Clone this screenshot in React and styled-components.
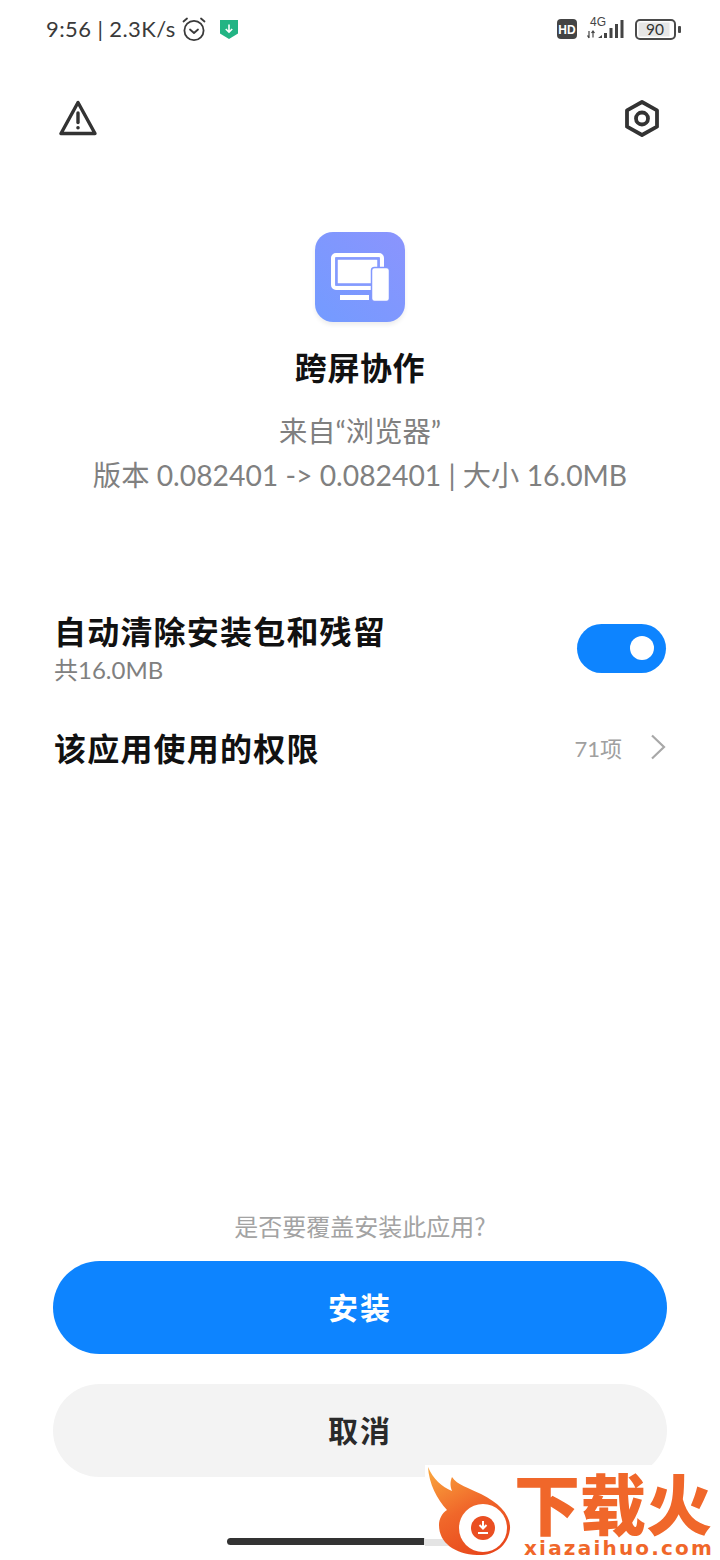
import styled, { createGlobalStyle } from 'styled-components';

const GlobalStyle = createGlobalStyle`
  html, body { margin: 0; padding: 0; background: #fff; }
  body { font-family: 'Noto Sans CJK SC', 'Noto Sans', sans-serif; }
`;

const Page = styled.div`
  position: relative;
  width: 720px;
  height: 1560px;
  overflow: hidden;
  background: #fff;
  display: flex;
  flex-direction: column;
`;

const StatusBar = styled.div`
  height: 30px;
  margin-top: 14px;
  padding: 0 38px 0 46px;
  display: flex;
  align-items: center;
  justify-content: space-between;
  color: #3a3a3a;
`;

const StatusGroup = styled.div`
  display: flex;
  align-items: center;
  gap: ${p => p.$gap || 0}px;
`;

const StatusText = styled.span`
  font-family: 'Lato', 'Open Sans', sans-serif;
  font-size: 22px;
  letter-spacing: 0.4px;
  line-height: 30px;
  margin-right: 5px;
`;

const TopBar = styled.div`
  margin-top: 52px;
  padding: 0 61px 0 59px;
  display: flex;
  justify-content: space-between;
  align-items: center;
  height: 44px;
`;

const Hero = styled.div`
  margin-top: 92px;
  display: flex;
  flex-direction: column;
  align-items: center;
`;

const AppIcon = styled.div`
  width: 90px;
  height: 90px;
  border-radius: 18px;
  background: linear-gradient(45deg, #739bff, #8b94fd);
  box-shadow: 0 3px 4px rgba(0, 0, 0, 0.07);
  display: flex;
`;

const AppName = styled.div`
  margin-top: 22px;
  font-size: 32px;
  line-height: 44px;
  font-weight: 700;
  color: #111;
  letter-spacing: 0.6px;
`;

const Meta = styled.div`
  margin-top: 21px;
  font-size: 28.3px;
  line-height: 44px;
  color: #808080;
  text-align: center;
  font-family: 'Lato', 'Noto Sans CJK SC', sans-serif;
`;

const Rows = styled.div`
  margin-top: 106px;
  padding: 0 54px;
  display: flex;
  flex-direction: column;
`;

const Row = styled.div`
  display: flex;
  align-items: center;
  justify-content: space-between;
  height: ${p => p.$h}px;
`;

const RowTitle = styled.div`
  font-size: 32px;
  line-height: 44px;
  font-weight: 700;
  color: #111;
  letter-spacing: 1.2px;
`;

const RowSub = styled.div`
  font-size: 24px;
  line-height: 36px;
  color: #808080;
  font-family: 'Lato', 'Noto Sans CJK SC', sans-serif;
`;

const Toggle = styled.div`
  width: 89px;
  height: 49px;
  border-radius: 25px;
  background: #0d84ff;
  display: flex;
  align-items: center;
  justify-content: flex-end;
  padding-right: 12px;
  box-sizing: border-box;
`;

const Knob = styled.div`
  width: 24px;
  height: 24px;
  border-radius: 50%;
  background: #fff;
`;

const Trailing = styled.div`
  display: flex;
  align-items: center;
  gap: 28px;
  font-size: 22px;
  color: #a0a0a0;
  font-family: 'Lato', 'Noto Sans CJK SC', sans-serif;
`;

const Footer = styled.div`
  margin-top: auto;
  padding: 0 53px;
  display: flex;
  flex-direction: column;
  align-items: center;
`;

const Question = styled.div`
  font-size: 24px;
  line-height: 32px;
  color: #a3a3a3;
  margin-bottom: 19px;
`;

const ActionButton = styled.div`
  width: 100%;
  height: 93px;
  padding-bottom: 4px;
  box-sizing: border-box;
  border-radius: 47px;
  margin-bottom: ${p => p.$gap}px;
  background: ${p => (p.$primary ? '#0d84ff' : '#f3f3f3')};
  color: ${p => (p.$primary ? '#fff' : '#2a2a2a')};
  font-size: 30px;
  font-weight: 700;
  letter-spacing: 2px;
  display: flex;
  align-items: center;
  justify-content: center;
`;

const HomeBar = styled.div`
  width: 273px;
  height: 7px;
  border-radius: 4px;
  margin: 0 0 15px 227px;
  background: linear-gradient(90deg, #333 0, #333 197px, #e2e2e2 197px);
`;

const Watermark = styled.div`
  position: absolute;
  left: 425px;
  top: 1465px;
  width: 295px;
  height: 95px;
  background: #fff;
  display: flex;
`;

const BrandText = styled.div`
  flex-shrink: 0;
  margin-left: -1px;
  display: flex;
  flex-direction: column;
  align-items: center;
  color: #f0672a;
  white-space: nowrap;
`;

const BrandName = styled.div`
  font-size: 66px;
  line-height: 66px;
  font-weight: 900;
  margin-top: 3px;
`;

const BrandUrl = styled.div`
  font-family: 'DejaVu Sans', sans-serif;
  font-weight: 700;
  font-size: 20px;
  line-height: 22px;
  letter-spacing: 2.2px;
  margin-top: 3px;
  margin-left: 12px;
`;

const Alarm = () => (
  <svg width="26" height="26" viewBox="0 0 26 26" fill="none" stroke="#3a3a3a" strokeWidth="1.8" strokeLinecap="round" strokeLinejoin="round">
    <circle cx="13" cy="14.5" r="9.6" />
    <path d="M9 13.5l4 3.5 4-3.5M2.5 5.5L6 2.5M23.5 5.5L20 2.5" />
  </svg>
);

const Shield = () => (
  <svg width="18" height="19" viewBox="0 0 18 19" style={{ marginLeft: 13 }}>
    <path d="M0 0h18v13.5L9 19 0 13.5z" fill="#22b484" />
    <path d="M9 4.5v7.5M5.8 9l3.2 3.2L12.2 9" fill="none" stroke="#fff" strokeWidth="1.6" />
  </svg>
);

const HdBadge = () => (
  <svg width="20" height="20" viewBox="0 0 20 20">
    <rect width="20" height="20" rx="4" fill="#444" />
    <text x="10" y="14.5" textAnchor="middle" fontSize="12" fontWeight="700" fontFamily="Liberation Sans" fill="#fff">HD</text>
  </svg>
);

const Signal = () => (
  <svg width="40" height="30" viewBox="0 0 40 30">
    <text x="4" y="12" fontSize="12" fontFamily="Liberation Sans" fill="#444">4G</text>
    <path d="M3 17v7M1.5 21.5l1.5 2.5M7 17v6.5M5.5 19l1.5-2 1.5 2" stroke="#444" strokeWidth="1.2" fill="none" />
    <path d="M12 24l4-3v3zM18 19h3v5h-3zM23.5 14h3v10h-3zM29 10h3v14h-3zM34.5 6h3v18h-3z" fill="#444" />
  </svg>
);

const Battery = () => (
  <svg width="47" height="21" viewBox="0 0 47 21">
    <rect x="1" y="1" width="39" height="19" rx="4" fill="#fff" stroke="#4a4a4a" strokeWidth="2" />
    <rect x="3.5" y="3.5" width="31" height="14" fill="#e6e6e6" />
    <rect x="43" y="7" width="3" height="7" rx="1" fill="#4a4a4a" />
    <text x="20" y="16" textAnchor="middle" fontSize="15.5" fontFamily="Lato" fill="#333">90</text>
  </svg>
);

const WarningIcon = () => (
  <svg width="38" height="36" viewBox="0 0 38 36" fill="none" stroke="#333" strokeWidth="3.4" strokeLinejoin="round" strokeLinecap="round">
    <path d="M19 2.5L2 33.5h34z" />
    <path d="M19 13v9.5" />
    <circle cx="19" cy="27.8" r="1" fill="#333" strokeWidth="1.6" />
  </svg>
);

const SettingsIcon = () => (
  <svg width="34" height="37" viewBox="0 0 34 37" fill="none" stroke="#333" strokeWidth="3.8" strokeLinejoin="round">
    <path d="M17 2l15 8.3v16.4L17 35 2 26.7V10.3z" />
    <circle cx="17" cy="18.5" r="6" />
  </svg>
);

const DevicesIcon = () => (
  <svg width="90" height="90" viewBox="0 0 90 90" fill="none">
    <rect x="18" y="23" width="49" height="33" rx="3" fill="#fff" fillOpacity="0.1" stroke="#fff" strokeWidth="4" />
    <rect x="22" y="27" width="41" height="25" fill="#fff" stroke="#8498fe" strokeWidth="1.5" />
    <rect x="25" y="63" width="29" height="5" fill="#fff" />
    <rect x="56.5" y="35.5" width="18" height="34" rx="3" fill="#fff" stroke="#8298fe" strokeWidth="1.5" />
  </svg>
);

const Chevron = () => (
  <svg width="16" height="26" viewBox="0 0 16 26" fill="none" stroke="#a8a8a8" strokeWidth="2.2">
    <path d="M2 1.5L14 13 2 24.5" />
  </svg>
);

const FlameLogo = () => (
  <svg width="88" height="95" viewBox="0 0 88 95" style={{ flexShrink: 0 }}>
    <defs>
      <linearGradient id="flame" x1="0.15" y1="0" x2="0.65" y2="1">
        <stop offset="0" stopColor="#f9a23c" />
        <stop offset="0.5" stopColor="#f0672a" />
        <stop offset="1" stopColor="#e8481c" />
      </linearGradient>
    </defs>
    <rect x="0" y="74" width="60" height="7" fill="#e4e4e4" />
    <path d="M3 2C8 14 17 22 27 26C25 21 25 17 27 12C32 20 44 23 56 29C74 38 86 50 85 64C83 82 68 91 52 90C30 89 14 78 14 60C14 54 17 48 22 45C12 34 4 19 3 2Z" fill="url(#flame)" />
    <circle cx="58" cy="63" r="24" fill="#fff" />
    <circle cx="58" cy="63" r="12" fill="#ea4f22" />
    <path d="M58 56v7M54.5 60l3.5 3.5 3.5-3.5M53 68h10" stroke="#fff" strokeWidth="2" fill="none" />
  </svg>
);

const App = () => {
  return (
    <>
      <GlobalStyle />
      <Page>
        <StatusBar>
          <StatusGroup>
            <StatusText>9:56 | 2.3K/s</StatusText>
            <Alarm />
            <Shield />
          </StatusGroup>
          <StatusGroup $gap={9}>
            <HdBadge />
            <Signal />
            <Battery />
          </StatusGroup>
        </StatusBar>

        <TopBar>
          <WarningIcon />
          <SettingsIcon />
        </TopBar>

        <Hero>
          <AppIcon>
            <DevicesIcon />
          </AppIcon>
          <AppName>跨屏协作</AppName>
          <Meta>
            来自“浏览器”
            <br />
            版本 0.082401 -&gt; 0.082401 | 大小 16.0MB
          </Meta>
        </Hero>

        <Rows>
          <Row $h={90}>
            <div>
              <RowTitle>自动清除安装包和残留</RowTitle>
              <RowSub>共16.0MB</RowSub>
            </div>
            <Toggle>
              <Knob />
            </Toggle>
          </Row>
          <Row $h={108}>
            <RowTitle>该应用使用的权限</RowTitle>
            <Trailing>
              71项
              <Chevron />
            </Trailing>
          </Row>
        </Rows>

        <Footer>
          <Question>是否要覆盖安装此应用?</Question>
          <ActionButton $primary $gap={30}>安装</ActionButton>
          <ActionButton $gap={61}>取消</ActionButton>
        </Footer>
        <HomeBar />

        <Watermark>
          <FlameLogo />
          <BrandText>
            <BrandName>下载火</BrandName>
            <BrandUrl>xiazaihuo.com</BrandUrl>
          </BrandText>
        </Watermark>
      </Page>
    </>
  );
};

export default App;
